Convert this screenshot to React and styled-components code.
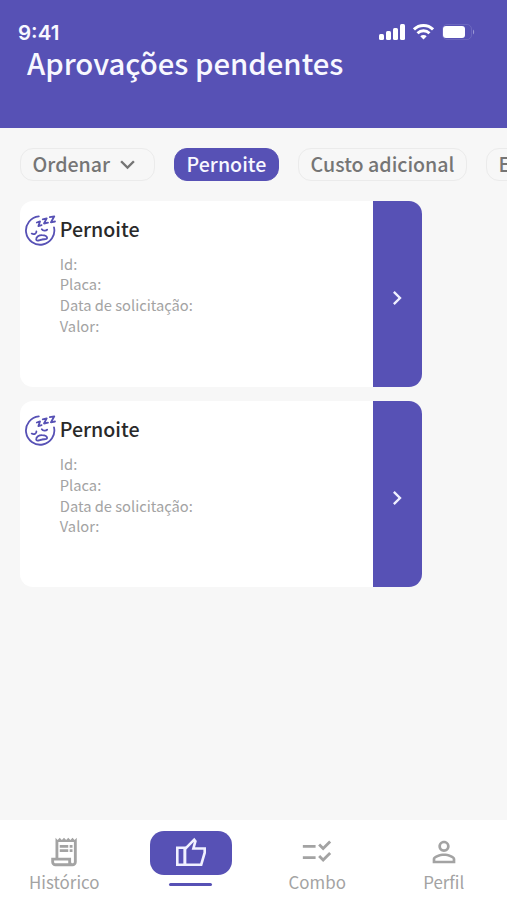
import React from 'react';
import styled, { createGlobalStyle } from 'styled-components';
import {
    MdChevronRight,
    MdChecklistRtl,
    MdKeyboardArrowDown,
    MdOutlineReceiptLong,
    MdPersonOutline,
} from 'react-icons/md';

const purple = '#5751b5';

const GlobalStyle = createGlobalStyle`
    * {
        box-sizing: border-box;
    }
    body {
        margin: 0;
        font-family: "Noto Sans CJK SC", "Noto Sans", sans-serif;
    }
    h1, h2, p {
        margin: 0;
    }
    button {
        padding: 0;
        border: 0;
        background: none;
        font: inherit;
    }
    svg {
        display: block;
        flex: none;
    }
`;

const Screen = styled.div`
    display: flex;
    flex-direction: column;
    width: 507px;
    height: 900px;
    overflow: hidden;
    background: #f7f7f7;
`;

const Header = styled.header`
    flex: none;
    height: 128px;
    padding-top: 20px;
    background: ${purple};
    color: #f8f8ff;
`;

const StatusBar = styled.div`
    display: flex;
    align-items: center;
    justify-content: space-between;
    height: 24px;
    padding: 0 32px 0 18px;
`;

const Time = styled.span`
    padding-top: 2px;
    font: 600 20.5px/24px Inter, sans-serif;
`;

const StatusIcons = styled.div`
    display: flex;
    align-items: center;
    gap: 8px;
`;

const Title = styled.h1`
    padding-left: 27px;
    font-size: 29.3px;
    font-weight: 500;
    line-height: 36px;
    white-space: nowrap;
`;

const Filters = styled.div`
    display: flex;
    flex: none;
    gap: 19px;
    height: 73px;
    padding: 20px 0 0 20px;
`;

const Chip = styled.button`
    display: flex;
    flex: none;
    align-items: center;
    gap: 3px;
    width: ${(props) => props.$width}px;
    height: 33px;
    padding: 0 0 1px 11.6px;
    border: 1px solid ${(props) => (props.$active ? purple : '#ebebeb')};
    border-radius: 13px;
    background: ${(props) => (props.$active ? purple : 'transparent')};
    color: ${(props) => (props.$active ? '#f8f8ff' : '#757575')};
    font-size: 19.6px;
    font-weight: 500;
    line-height: 30px;
    white-space: nowrap;
`;

const List = styled.main`
    display: flex;
    flex: 1;
    flex-direction: column;
    gap: 14.8px;
    padding-left: 20px;
`;

const Card = styled.article`
    display: flex;
    width: 401.5px;
    height: 185.7px;
    overflow: hidden;
    border-radius: 13px;
    background: #fff;
`;

const CardBody = styled.div`
    display: grid;
    flex: 1;
    grid-template-columns: 36px 1fr;
    column-gap: 3.8px;
    align-content: start;
    padding-top: 12px;
`;

const CardTitle = styled.h2`
    color: #292929;
    font-size: 19.6px;
    font-weight: 500;
    line-height: 32px;
`;

const Details = styled.div`
    grid-column: 2;
    padding-top: 6.6px;
    color: #a3a3a3;
    font-size: 14.7px;
    line-height: 20.8px;
`;

const OpenButton = styled.button`
    display: flex;
    align-items: center;
    justify-content: center;
    width: 49px;
    padding: 8px 1px 0 0;
    background: ${purple};
    color: #f0f0ff;
`;

const Nav = styled.nav`
    display: grid;
    flex: none;
    grid-template-columns: repeat(4, 1fr);
    justify-items: center;
    align-items: start;
    height: 80px;
    padding: 11px 0 0 1px;
    background: #fff;
`;

const NavItem = styled.button`
    display: flex;
    flex-direction: column;
    align-items: center;
    padding-top: 4px;
    color: #a3a3a3;
    font-size: 16.9px;
    line-height: 26px;
`;

const ActiveItem = styled.button`
    display: flex;
    flex-direction: column;
    align-items: center;
    gap: 8px;
`;

const ActivePill = styled.span`
    display: flex;
    align-items: center;
    justify-content: center;
    width: 82px;
    height: 44px;
    padding-bottom: 3px;
    border-radius: 14px;
    background: ${purple};
`;

const Indicator = styled.span`
    width: 43px;
    height: 3px;
    border-radius: 2px;
    background: ${purple};
`;

function Signal() {
    return (
        <svg width="26" height="16" viewBox="0 0 26 16" fill="#fff">
            <rect x="0" y="10" width="5" height="6" rx="1.5" />
            <rect x="7" y="7" width="5" height="9" rx="1.5" />
            <rect x="14" y="4" width="5" height="12" rx="1.5" />
            <rect x="21" y="0" width="5" height="16" rx="1.5" />
        </svg>
    );
}

function Wifi() {
    return (
        <svg width="21" height="16" viewBox="0 0 21 16" fill="none" stroke="#fff" strokeWidth="2.9">
            <path d="M1 5.4a13.6 13.6 0 0 1 19 0" />
            <path d="M4.5 9.2a8.6 8.6 0 0 1 12 0" />
            <path d="M10.5 15.6l-3.2-3.3a4.6 4.6 0 0 1 6.4 0z" fill="#fff" stroke="none" />
        </svg>
    );
}

function Battery() {
    return (
        <svg width="33" height="16" viewBox="0 0 33 16">
            <rect x="0.5" y="0.5" width="29" height="15" rx="4.5" fill="none" stroke="#fff" strokeOpacity="0.12" />
            <rect x="1" y="2" width="22" height="12" rx="3" fill="#fff" />
            <path d="M31 5.5a3.2 3.2 0 0 1 0 5z" fill="#fff" fillOpacity="0.4" />
        </svg>
    );
}

function SleepyFace() {
    return (
        <svg width="36" height="34" viewBox="0 0 36 34" fill="none" stroke={purple} strokeWidth="1.8" strokeLinecap="round" strokeLinejoin="round">
            <path d="M18.8 3.4A14.2 14.2 0 1 0 34 14.4" />
            <path d="M16.8 9.5l3.2-1.1-1.6 4.7 3.2-1" />
            <path d="M22.7 6.3l4-1-2.7 5.2 4-.9" />
            <path d="M29.8 4.1l4.5-.8-3.3 6 4-.8" />
            <path d="M16.4 18.4c.3 2.3-2.5 3.6-4.7 2.2" />
            <path d="M21.8 16.2c1.1 1.8 4.2 2 5.4.4" />
            <path d="M16.2 26.6c-.2-2.7 2.8-4.6 5.9-4.5 2.7 0 4.8 1.3 5 2.8.2 1.7-2.6 1.1-5 1.6-2.7.5-5.6 2.1-5.9.1z" />
        </svg>
    );
}

function ThumbUp() {
    return (
        <svg width="32" height="30" viewBox="0 0 32 30" fill="none" stroke="#f0f0ff" strokeWidth="2.6">
            <path d="M2.3 10.8h7.6v16.9H2.3z" />
            <path d="M9.9 12.2L19.2 2.7l1.2 1.5-2 7.3h11.3v4.2l-3.5 12H9.9z" />
        </svg>
    );
}

function ApprovalCard({ title }) {
    return (
        <Card>
            <CardBody>
                <SleepyFace />
                <CardTitle>{title}</CardTitle>
                <Details>
                    <p>Id:</p>
                    <p>Placa:</p>
                    <p>Data de solicitação:</p>
                    <p>Valor:</p>
                </Details>
            </CardBody>
            <OpenButton aria-label="Abrir">
                <MdChevronRight size={28} />
            </OpenButton>
        </Card>
    );
}

export default function App() {
    return (
        <Screen>
            <GlobalStyle />
            <Header>
                <StatusBar>
                    <Time>9:41</Time>
                    <StatusIcons>
                        <Signal />
                        <Wifi />
                        <Battery />
                    </StatusIcons>
                </StatusBar>
                <Title>Aprovações pendentes</Title>
            </Header>
            <Filters>
                <Chip $width={135}>
                    Ordenar
                    <MdKeyboardArrowDown size={29} />
                </Chip>
                <Chip $width={105} $active>Pernoite</Chip>
                <Chip $width={169}>Custo adicional</Chip>
                <Chip $width={90}>Extra</Chip>
            </Filters>
            <List>
                <ApprovalCard title="Pernoite" />
                <ApprovalCard title="Pernoite" />
            </List>
            <Nav>
                <NavItem>
                    <MdOutlineReceiptLong size={34} />
                    Histórico
                </NavItem>
                <ActiveItem aria-label="Aprovações">
                    <ActivePill>
                        <ThumbUp />
                    </ActivePill>
                    <Indicator />
                </ActiveItem>
                <NavItem>
                    <MdChecklistRtl size={34} />
                    Combo
                </NavItem>
                <NavItem>
                    <MdPersonOutline size={34} />
                    Perfil
                </NavItem>
            </Nav>
        </Screen>
    );
}
